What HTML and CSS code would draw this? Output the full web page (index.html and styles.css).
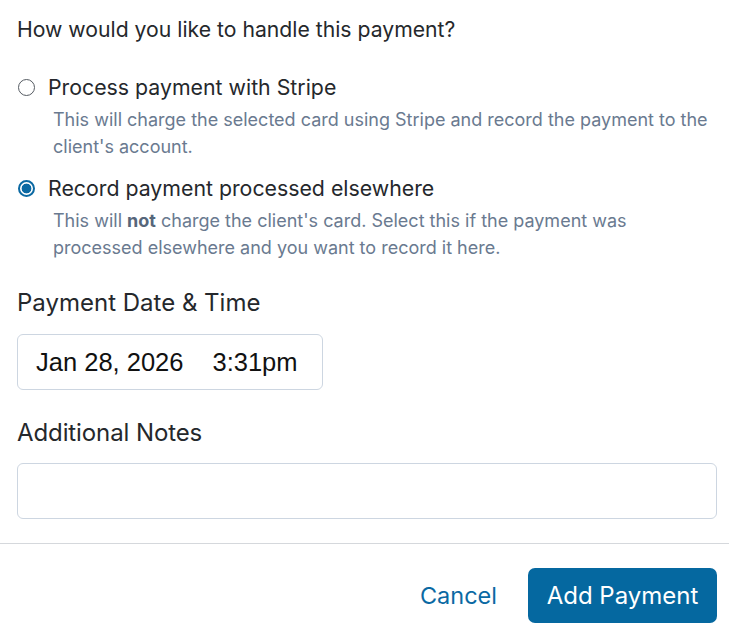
FILE: index.html
```html
<!DOCTYPE html>
<html>
<head>
<meta charset="utf-8">
<link rel="stylesheet" href="styles.css">
</head>
<body>
<div class="dialog">
  <div class="content">
    <p class="question">How would you like to handle this payment?</p>
    <div class="options">
      <div class="option">
        <div class="option-head">
          <span class="radio"></span>
          <span class="option-label">Process payment with Stripe</span>
        </div>
        <p class="option-desc">This will charge the selected card using Stripe and record the payment to the client's account.</p>
      </div>
      <div class="option">
        <div class="option-head">
          <span class="radio checked"></span>
          <span class="option-label">Record payment processed elsewhere</span>
        </div>
        <p class="option-desc">This will <strong>not</strong> charge the client's card. Select this if the payment was processed elsewhere and you want to record it here.</p>
      </div>
    </div>
    <div class="field">
      <div class="field-label">Payment Date &amp; Time</div>
      <div class="date-input"><span>Jan 28, 2026</span><span>3:31pm</span></div>
    </div>
    <div class="field notes">
      <div class="field-label">Additional Notes</div>
      <div class="text-input"></div>
    </div>
  </div>
  <div class="footer">
    <button class="btn-cancel">Cancel</button>
    <button class="btn-primary">Add Payment</button>
  </div>
</div>
</body>
</html>
```
FILE: styles.css
```css
* { box-sizing: border-box; }
html, body { margin: 0; padding: 0; background: #fff; }
body { font-family: Inter, "Noto Sans", sans-serif; color: #1f2328; }
.dialog { width: 729px; height: 639px; display: flex; flex-direction: column; }
.content { padding: 14px 12px 0 17px; }
.question { margin: 0; font-size: 21.2px; line-height: 30px; color: #25282c; }
.options { margin-top: 28px; display: flex; flex-direction: column; gap: 13px; }
.option-head { display: flex; align-items: center; gap: 13px; }
.radio { width: 17px; height: 17px; border: 1.5px solid #555b62; border-radius: 50%; flex: none; margin-left: 1px; }
.radio.checked { border: 2px solid #0b69a3; background: radial-gradient(circle, #0b69a3 0 4.6px, #fff 5.2px); }
.option-label { font-size: 21.3px; line-height: 30px; color: #25282c; }
.option-desc { margin: 4px 0 0 36px; font-size: 18px; line-height: 27px; color: #6a7a90; }
.option-desc strong { font-weight: 700; color: #56667a; }
.field { margin-top: 27px; }
.field-label { font-size: 24px; line-height: 30px; color: #25282c; }
.date-input { margin-top: 16px; width: 306px; height: 56px; border: 1px solid #cdd6e1; border-radius: 6px; display: flex; align-items: center; gap: 29px; padding-left: 18px; font-family: "Liberation Sans", Arial, sans-serif; font-size: 25.5px; color: #111; }
.notes { margin-top: 28px; }
.notes .field-label { letter-spacing: -0.1px; }
.text-input { margin-top: 15px; width: 700px; height: 56px; border: 1px solid #cdd6e1; border-radius: 6px; }
.footer { margin-top: auto; border-top: 1px solid #d5d8dc; height: 96px; display: flex; align-items: flex-start; justify-content: flex-end; gap: 31px; padding: 24px 12px 0 0; }
.btn-cancel { background: none; border: none; font-family: Inter, sans-serif; font-size: 23.5px; color: #0b69a3; padding: 0; height: 55px; }
.btn-primary { background: #0568a0; color: #fff; border: none; border-radius: 7px; width: 189px; height: 55px; font-family: Inter, sans-serif; font-size: 24px; padding: 0; }
```
